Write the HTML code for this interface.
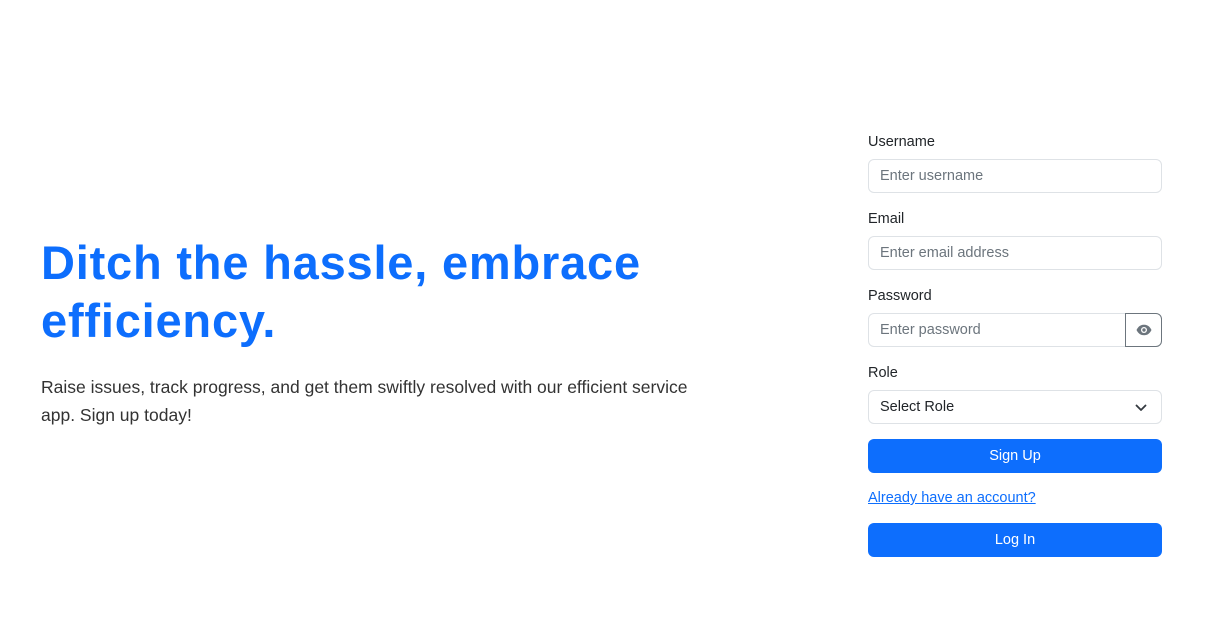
<!DOCTYPE html>
<html><head><meta charset="utf-8"><style>
*{box-sizing:border-box;margin:0;padding:0}
body{width:1215px;height:632px;background:#fff;font-family:"Liberation Sans",sans-serif;color:#212529;position:relative;overflow:hidden}
h1{position:absolute;left:41px;top:234px;width:700px;font-size:47px;line-height:58px;color:#0d6efd;font-weight:bold;letter-spacing:0.8px}
p.lead{position:absolute;left:41px;top:373px;width:670px;font-size:17.5px;line-height:28px;color:#333;font-weight:300}
.form{position:absolute;left:868px;top:0;width:294px}
label{position:absolute;left:0;font-size:14.5px;color:#212529}
.inp{position:absolute;left:0;width:294px;height:34px;border:1px solid #dee2e6;border-radius:6px;font-size:14.5px;color:#6c757d;padding:8px 11px}
.eye{position:absolute;left:257px;width:37px;height:34px;border:1px solid #6c757d;border-radius:0 6px 6px 0;display:flex;align-items:center;justify-content:center}
.btn{position:absolute;left:0;width:294px;height:34px;background:#0d6efd;color:#fff;border-radius:6px;font-size:14.5px;text-align:center;line-height:34px}
a{position:absolute;left:0;font-size:14.5px;color:#0d6efd;text-decoration:underline}
</style></head><body>
<h1>Ditch the hassle, embrace efficiency.</h1>
<p class="lead">Raise issues, track progress, and get them swiftly resolved with our efficient service app. Sign up today!</p>
<div class="form">
<label style="top:134px">Username</label>
<div class="inp" style="top:159px">Enter username</div>
<label style="top:211px">Email</label>
<div class="inp" style="top:236px">Enter email address</div>
<label style="top:288px">Password</label>
<div class="inp" style="top:313px;width:258px;border-radius:6px 0 0 6px">Enter password</div>
<div class="eye" style="top:313px"><svg width="16" height="12" viewBox="0 0 16 12"><path d="M0.5 6C2.5 2 5 0.8 8 0.8S13.5 2 15.5 6C13.5 10 11 11.2 8 11.2S2.5 10 0.5 6Z" fill="#6c757d"/><circle cx="8" cy="6" r="3" fill="#fff"/><circle cx="8" cy="6" r="1.7" fill="#6c757d"/></svg></div>
<label style="top:365px">Role</label>
<div class="inp" style="top:390px;color:#212529">Select Role<svg style="position:absolute;right:14px;top:12px" width="12" height="9" viewBox="0 0 12 9"><path d="M1.5 2.5L6 7L10.5 2.5" stroke="#343a40" stroke-width="1.8" fill="none" stroke-linecap="round" stroke-linejoin="round"/></svg></div>
<div class="btn" style="top:439px">Sign Up</div>
<a style="top:490px">Already have an account?</a>
<div class="btn" style="top:523px">Log In</div>
</div>
</body></html>
